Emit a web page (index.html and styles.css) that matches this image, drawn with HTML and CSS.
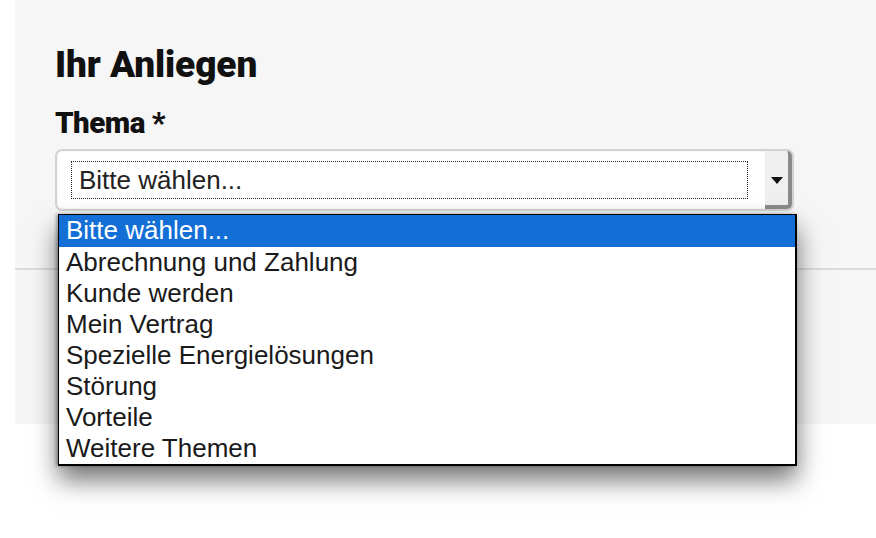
FILE: index.html
```html
<!DOCTYPE html>
<html lang="de">
<head>
<meta charset="utf-8">
<link rel="stylesheet" href="styles.css">
</head>
<body>
<div class="page">
  <div class="panel">
    <div class="panel-top">
      <h1 class="title">Ihr Anliegen</h1>
      <div class="label">Thema *</div>
      <div class="select-wrap">
        <div class="select">
          <div class="select-field"><span class="focus-ring">Bitte wählen...</span></div>
          <div class="select-btn"><span class="arrow"></span></div>
        </div>
        <ul class="dropdown">
          <li class="opt selected">Bitte wählen...</li>
          <li class="opt">Abrechnung und Zahlung</li>
          <li class="opt">Kunde werden</li>
          <li class="opt">Mein Vertrag</li>
          <li class="opt">Spezielle Energielösungen</li>
          <li class="opt">Störung</li>
          <li class="opt">Vorteile</li>
          <li class="opt">Weitere Themen</li>
        </ul>
      </div>
    </div>
    <div class="panel-bottom"></div>
  </div>
</div>
</body>
</html>
```

FILE: styles.css
```css
html, body {
  margin: 0;
  padding: 0;
  background: #ffffff;
}
body {
  width: 876px;
  height: 538px;
  overflow: hidden;
  font-family: "Liberation Sans", Arial, sans-serif;
}
.page {
  padding-left: 15px;
}
.panel {
  background: #f6f6f6;
  height: 424px;
  display: flex;
  flex-direction: column;
}
.panel-top {
  height: 268px;
  border-bottom: 2px solid #dcdcdc;
  padding-left: 40px;
}
.title {
  margin: 0;
  padding-top: 45px;
  font-family: Roboto, "Liberation Sans", sans-serif;
  font-weight: 900;
  font-size: 37px;
  line-height: 40px;
  letter-spacing: -0.1px;
  color: #111;
}
.label {
  margin-top: 22px;
  font-family: Roboto, "Liberation Sans", sans-serif;
  font-weight: 900;
  font-size: 29.5px;
  line-height: 32px;
  letter-spacing: -0.5px;
  color: #111;
}
.select-wrap {
  position: relative;
  margin-top: 10px;
  width: 739px;
}
.select {
  height: 58px;
  border: 2px solid #d2d2d2;
  border-radius: 7px;
  background: #fff;
  display: flex;
  box-shadow: inset 0 0 3px rgba(0,0,0,0.08);
}
.select-field {
  flex: 1;
  padding: 10px 17px 10px 14px;
  display: flex;
}
.focus-ring {
  flex: 1;
  border: 1px dotted #222;
  font-size: 26px;
  line-height: 36px;
  padding-left: 7px;
  color: #222;
}
.select-btn {
  width: 23px;
  background: #efefef;
  border-right: 4px solid #8a8a8a;
  border-bottom: 4px solid #8a8a8a;
  border-radius: 0 5px 5px 0;
  display: flex;
  align-items: center;
  justify-content: center;
}
.arrow {
  width: 0;
  height: 0;
  border-left: 6px solid transparent;
  border-right: 6px solid transparent;
  border-top: 7px solid #111;
  margin-top: 4px;
}
.dropdown {
  position: absolute;
  left: 3px;
  top: 65px;
  width: 736px;
  margin: 0;
  padding: 0;
  list-style: none;
  background: #fff;
  border: 1px solid #000;
  border-right-width: 2px;
  border-bottom-width: 2px;
  box-shadow: 0 14px 24px rgba(0,0,0,0.55), -2px 0 3px rgba(0,0,0,0.3);
  z-index: 5;
}
.opt {
  height: 31px;
  line-height: 31px;
  font-size: 26px;
  padding-left: 7px;
  color: #1a1a1a;
  white-space: nowrap;
}
.opt.selected {
  background: #136fd6;
  color: #fff;
  height: 32px;
}
.panel-bottom {
  flex: 1;
}
```
